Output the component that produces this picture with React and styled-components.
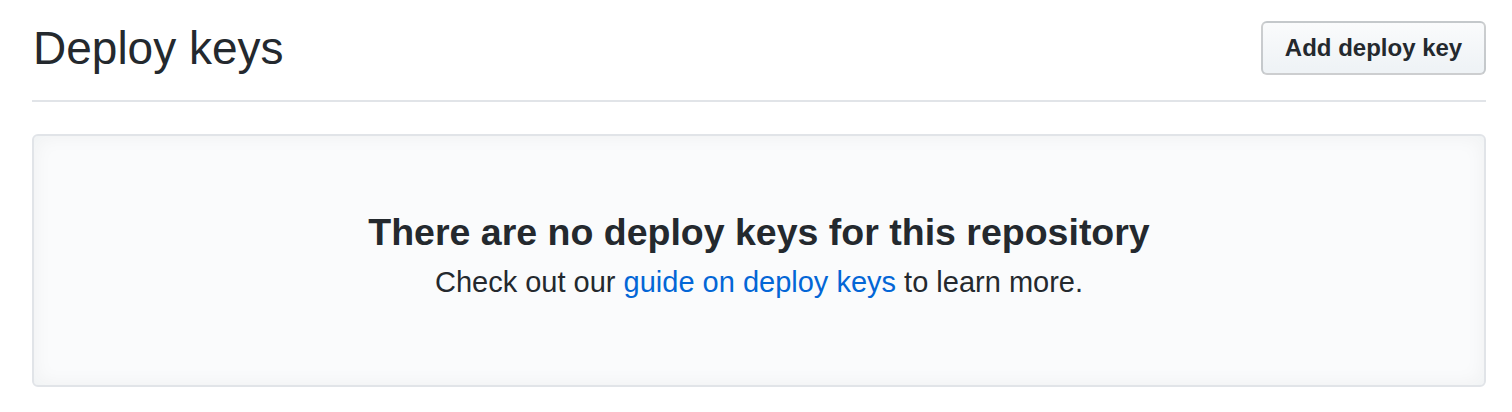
import React from "react";
import styled, { createGlobalStyle } from "styled-components";

const Global = createGlobalStyle`
  html, body { margin: 0; padding: 0; background: #fff; }
  body { font-family: "Liberation Sans", Arial, sans-serif; color: #24292e; }
`;

const Page = styled.div`
  padding: 21px 26px 0 32px;
`;

const Subhead = styled.div`
  display: flex;
  align-items: center;
  justify-content: space-between;
  height: 54px;
  padding-bottom: 25px;
  border-bottom: 2px solid #e1e4e8;
  margin-bottom: 32px;
`;

const Heading = styled.h2`
  margin: 0 0 0 1px;
  font-size: 46px;
  font-weight: 400;
  line-height: 54px;
  color: #24292e;
`;

const Button = styled.button`
  box-sizing: border-box;
  height: 54px;
  width: 225px;
  padding: 0;
  font-family: "Liberation Sans", Arial, sans-serif;
  font-size: 24px;
  font-weight: 700;
  color: #24292e;
  background: linear-gradient(180deg, #fafbfc 0%, #eff3f6 90%);
  border: 2px solid rgba(27, 31, 35, 0.2);
  border-radius: 6px;
  cursor: pointer;
`;

const Blankslate = styled.div`
  box-sizing: border-box;
  height: 253px;
  padding-top: 71px;
  text-align: center;
  background: #fafbfc;
  border: 2px solid #e1e4e8;
  border-radius: 6px;
  box-shadow: inset 0 0 20px rgba(27, 31, 35, 0.05);
`;

const Title = styled.h3`
  margin: 0 0 4px;
  font-size: 37.5px;
  font-weight: 700;
  line-height: 50px;
  color: #24292e;
`;

const Text = styled.p`
  margin: 0;
  font-size: 29px;
  line-height: 42px;
  color: #24292e;
`;

const Link = styled.a`
  color: #0366d6;
  text-decoration: none;
`;

export default function App() {
  return (
    <>
      <Global />
      <Page>
        <Subhead>
          <Heading>Deploy keys</Heading>
          <Button>Add deploy key</Button>
        </Subhead>
        <Blankslate>
          <Title>There are no deploy keys for this repository</Title>
          <Text>
            Check out our <Link href="#">guide on deploy keys</Link> to learn more.
          </Text>
        </Blankslate>
      </Page>
    </>
  );
}
